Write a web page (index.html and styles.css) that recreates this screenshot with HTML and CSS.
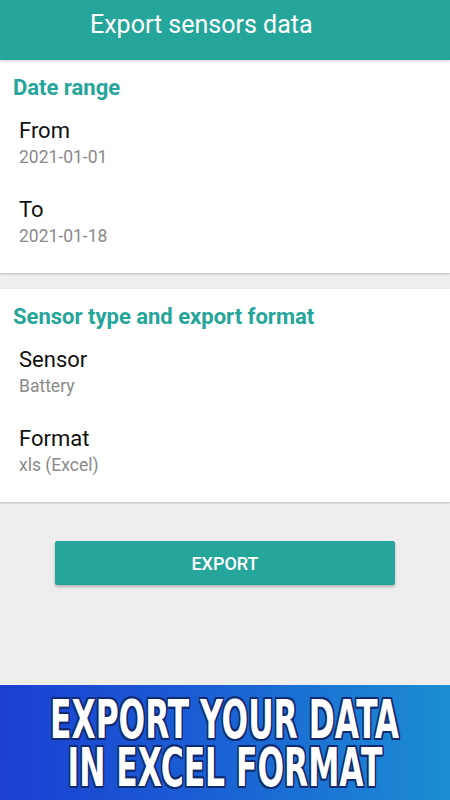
FILE: index.html
```html
<!DOCTYPE html>
<html lang="en">
<head>
<meta charset="UTF-8" />
<meta name="viewport" content="width=device-width, initial-scale=1" />
<title>Export sensors data</title>
<link rel="stylesheet" href="styles.css">
</head>
<body>

<header class="toolbar">Export sensors data</header>

<main class="content">
  <section class="card">
    <h2 class="card-title">Date range</h2>
    <div class="pref">
      <div class="pref-label">From</div>
      <div class="pref-value">2021-01-01</div>
    </div>
    <div class="pref">
      <div class="pref-label">To</div>
      <div class="pref-value">2021-01-18</div>
    </div>
  </section>

  <section class="card">
    <h2 class="card-title">Sensor type and export format</h2>
    <div class="pref">
      <div class="pref-label">Sensor</div>
      <div class="pref-value">Battery</div>
    </div>
    <div class="pref">
      <div class="pref-label">Format</div>
      <div class="pref-value">xls (Excel)</div>
    </div>
  </section>

  <div class="actions">
    <button class="export-btn">EXPORT</button>
  </div>
</main>

<footer class="promo">
  <div class="promo-line">EXPORT YOUR DATA</div>
  <div class="promo-line">IN EXCEL FORMAT</div>
</footer>

</body>
</html>
```

FILE: styles.css
```css
* {
  box-sizing: border-box;
}
body {
  margin: 0;
  height: 800px;
  display: flex;
  flex-direction: column;
  font-family: Roboto, 'Noto Sans', sans-serif;
  background-color: #eeeeee;
  color: #000;
}

.toolbar {
  height: 60px;
  padding: 10px 0 0 90px;
  background-color: #26a69a;
  color: #fff;
  font-size: 25px;
  line-height: 30px;
  box-shadow: 0 1px 3px rgba(0, 0, 0, 0.2);
  position: relative;
  z-index: 1;
}

.content {
  flex: 1;
  display: flex;
  flex-direction: column;
  gap: 16px;
}

.card {
  background-color: #fff;
  padding-bottom: 3px;
  box-shadow: 0 1px 2px rgba(0, 0, 0, 0.22);
}

.card-title {
  margin: 0;
  padding: 16px 13px 12px;
  font-size: 22px;
  line-height: 24px;
  font-weight: 700;
  color: #26a69a;
}

.pref {
  height: 79px;
  padding: 7px 19px 0;
}

.pref-label {
  font-size: 22px;
  line-height: 24px;
  color: #111;
}

.pref-value {
  margin-top: 4px;
  font-size: 17.5px;
  line-height: 20px;
  color: #8a8a8a;
}

.actions {
  padding-top: 23px;
  display: flex;
  justify-content: center;
}

.export-btn {
  width: 340px;
  height: 44px;
  border: none;
  border-radius: 2px;
  background-color: #26a69a;
  color: #fff;
  font-family: Roboto, sans-serif;
  font-size: 18px;
  font-weight: 500;
  box-shadow: 0 2px 3px rgba(0, 0, 0, 0.25);
}

.promo {
  height: 115px;
  padding-top: 11px;
  display: flex;
  flex-direction: column;
  align-items: center;
  background: linear-gradient(90deg, #1b3fd2 0%, #1a62d4 50%, #1b8ed2 100%);
  overflow: hidden;
}

.promo-line {
  flex: none;
  font-family: 'DejaVu Sans Condensed', 'DejaVu Sans', sans-serif;
  font-weight: 700;
  font-size: 54px;
  line-height: 48px;
  white-space: nowrap;
  color: #fff;
  transform: scaleX(0.645);
  text-shadow:
    -2px -2px 0 #0f2a6e, 2px -2px 0 #0f2a6e,
    -2px 2px 0 #0f2a6e, 2px 2px 0 #0f2a6e,
    0 -2px 0 #0f2a6e, 0 2px 0 #0f2a6e,
    -2px 0 0 #0f2a6e, 2px 0 0 #0f2a6e;
}
```
